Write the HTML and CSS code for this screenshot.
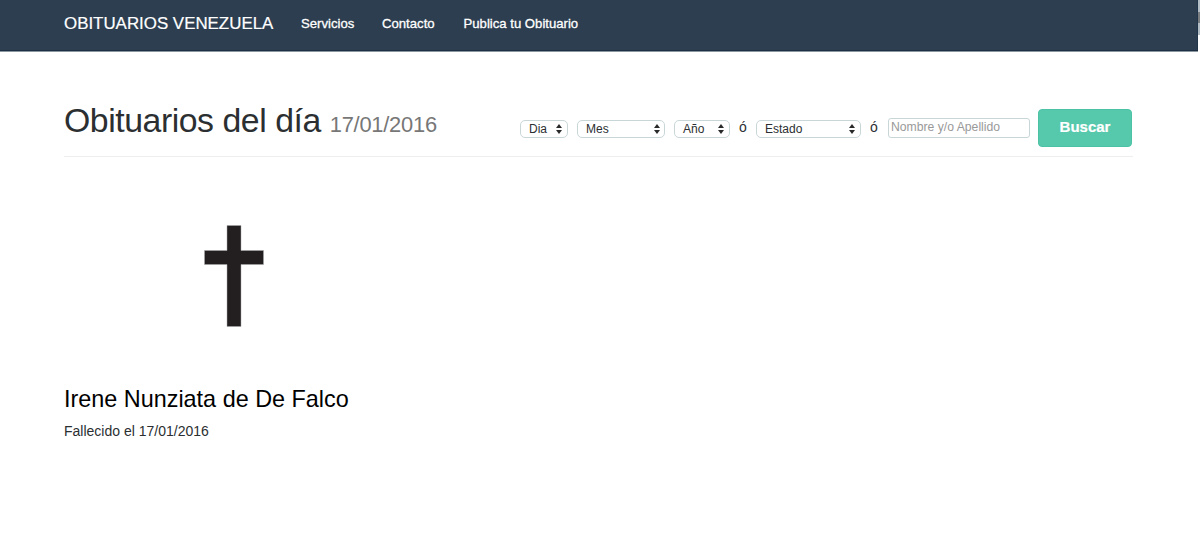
FILE: index.html
```html
<!DOCTYPE html>
<html lang="es">
<head>
<meta charset="utf-8">
<title>Obituarios Venezuela</title>
<link rel="stylesheet" href="styles.css">
</head>
<body>
<div class="top">
  <nav class="navbar">
    <a class="brand">OBITUARIOS VENEZUELA</a>
    <a class="link services">Servicios</a>
    <a class="link contact">Contacto</a>
    <a class="link publish">Publica tu Obituario</a>
  </nav>
  <div class="edge"><div class="edge-thumb"></div></div>
</div>
<main class="container">
  <header class="page-header">
    <h1>Obituarios del día <small>17/01/2016</small></h1>
    <form class="search">
      <div class="select day"><span>Dia</span><svg class="arrows" viewBox="0 0 6 10"><path d="M0 4 3 0 6 4zM0 6h6L3 10z"/></svg></div>
      <div class="select month"><span>Mes</span><svg class="arrows" viewBox="0 0 6 10"><path d="M0 4 3 0 6 4zM0 6h6L3 10z"/></svg></div>
      <div class="select year"><span>Año</span><svg class="arrows" viewBox="0 0 6 10"><path d="M0 4 3 0 6 4zM0 6h6L3 10z"/></svg></div>
      <span class="or">ó</span>
      <div class="select state"><span>Estado</span><svg class="arrows" viewBox="0 0 6 10"><path d="M0 4 3 0 6 4zM0 6h6L3 10z"/></svg></div>
      <span class="or">ó</span>
      <input class="name" type="text" placeholder="Nombre y/o Apellido">
      <button class="submit" type="button">Buscar</button>
    </form>
  </header>
  <article class="card">
    <svg class="cross" viewBox="0 0 60 102"><path d="M23 .5h14v25h22.5v14H37v62H23v-62H.5v-14H23z"/></svg>
    <h3>Irene Nunziata de De Falco</h3>
    <p>Fallecido el 17/01/2016</p>
  </article>
</main>
</body>
</html>
```
FILE: styles.css
```css
* { box-sizing: border-box; }
body { margin: 0; height: 556px; overflow: hidden; background: #fff; color: #2b2f31; font-family: "Liberation Sans", Arial, sans-serif; }
.top { display: flex; height: 52px; }
.navbar { display: flex; width: 1198px; height: 52px; padding: 0 0 5px 64px; align-items: center; background: #2c3e50; border-bottom: 1px solid #8d97a1; box-shadow: inset 0 -1px #1c2f42, inset -1px 0 #21364b; color: #fff; }
.brand { width: 237px; padding-top: 2px; font-size: 16.9px; white-space: nowrap; -webkit-text-stroke: .2px #fff; }
.link { font-size: 13.15px; white-space: nowrap; -webkit-text-stroke: .3px #fff; }
.services { width: 81px; }
.contact { width: 81.5px; }
.edge { width: 2px; height: 35px; padding-top: 12px; background: #b3bdc5; }
.edge-thumb { height: 11px; background: #7c7f82; }
.container { width: 1069px; margin-left: 64px; }
.page-header { display: flex; height: 105px; align-items: flex-start; border-bottom: 1px solid #eee; }
h1 { width: 456px; margin: 48px 0 0; font-size: 33.8px; font-weight: 400; line-height: 40px; letter-spacing: -.45px; white-space: nowrap; }
h1 small { color: #777; font-size: 21.9px; letter-spacing: -.25px; }
.search { display: flex; height: 38px; margin-top: 57px; align-items: center; font-size: 12px; }
.select { display: flex; height: 18px; margin-top: 1px; padding: 0 4px 0 8px; align-items: center; justify-content: space-between; border: 1px solid #c9d6d8; border-radius: 5px; }
.arrows { width: 6px; height: 10px; fill: #292929; }
.day { width: 48px; padding-right: 5px; }
.month { width: 88px; margin-left: 9px; }
.year { width: 56px; margin-left: 9px; padding-right: 5px; }
.state { width: 105px; padding-right: 5px; }
.or { width: 26px; padding-bottom: 3px; text-align: center; font-size: 14px; }
.name { width: 142px; height: 20px; margin-left: 1px; padding: 0 2px 2px; border: 1px solid #c9d6d8; border-radius: 3px; background: #fff; font: 12.2px "Liberation Sans", Arial, sans-serif; }
.name::placeholder { color: #999; }
.submit { width: 94px; height: 38px; margin-left: 8px; padding: 0 0 3px; border: 1px solid #4dc3a5; border-radius: 4px; background: #56c9ac; color: #fff; font: 700 15px "Liberation Sans", Arial, sans-serif; -webkit-text-stroke: .2px #fff; }
.cross { display: block; width: 60px; height: 102px; margin: 68px 0 0 140px; fill: #231f20; stroke: #aaa; stroke-width: .5px; }
h3 { margin: 57px 0 0; color: #000; font-size: 23.4px; font-weight: 400; line-height: 30px; }
.card p { margin: 8px 0 0; font-size: 14px; line-height: 18px; }
```
